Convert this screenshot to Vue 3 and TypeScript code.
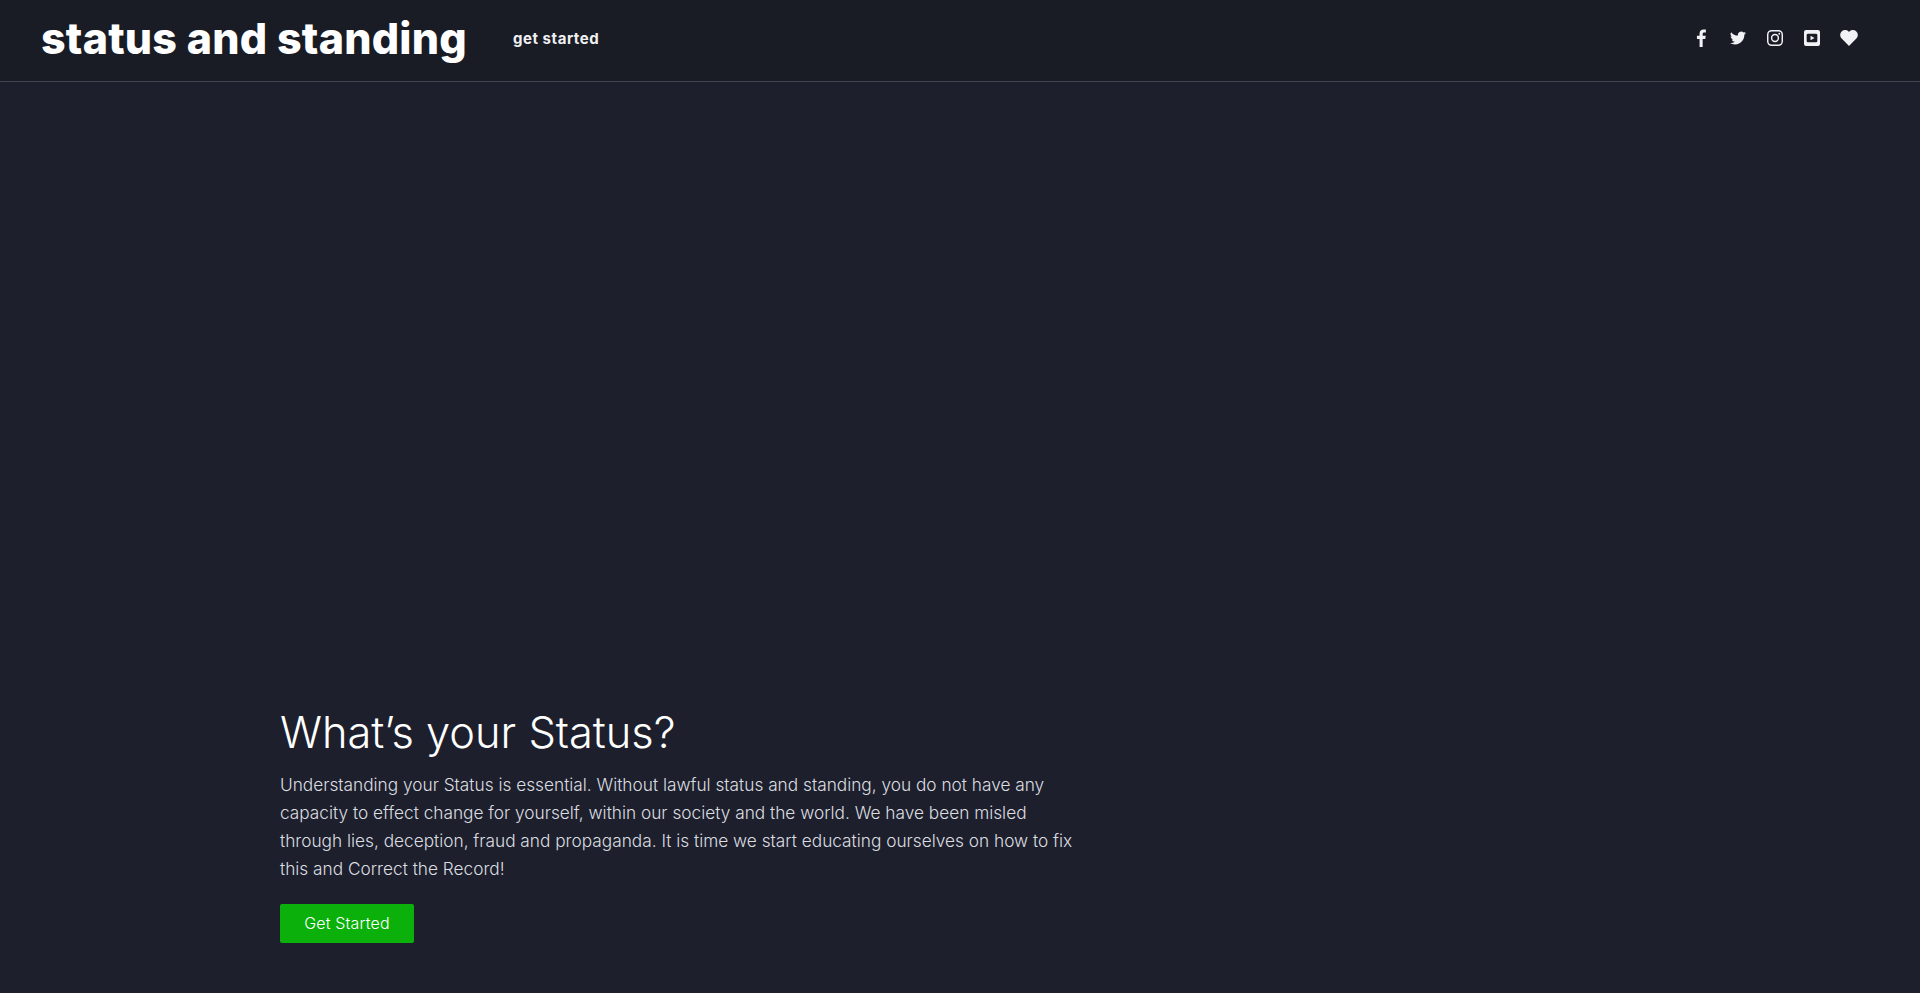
<template>
  <div class="page">
    <header class="topbar">
      <a class="brand">status and standing</a>
      <a class="nav-link">get started</a>
      <div class="socials">
        <svg v-for="icon in icons" :key="icon.name" class="social" :viewBox="icon.box" fill="currentColor">
          <path :d="icon.d" :fill-rule="icon.rule" />
        </svg>
      </div>
    </header>
    <main class="hero">
      <div class="hero-copy">
        <h1>What’s your Status?</h1>
        <p>Understanding your Status is essential. Without lawful status and standing, you do not have any capacity to effect change for yourself, within our society and the world. We have been misled through lies, deception, fraud and propaganda. It is time we start educating ourselves on how to fix this and Correct the Record!</p>
        <button class="cta">Get Started</button>
      </div>
    </main>
  </div>
</template>

<script setup lang="ts">
interface SocialIcon {
  name: string
  box: string
  d: string
  rule?: 'evenodd' | 'nonzero'
}

const icons: SocialIcon[] = [
  {
    name: 'facebook',
    box: '0 0 24 24',
    d: 'M14.2 24V13.3h3.500l.6-4.200h-4.100V6.500c0-1.200.4-2 2.100-2h2.200V.8C18.100.7 16.800.6 15.400.6c-3.100 0-5.300 1.900-5.300 5.400v3.100H6.600v4.200h3.500V24z'
  },
  {
    name: 'twitter',
    box: '-1.5 -1.5 27 27',
    d: 'M24 4.600c-.9.400-1.800.7-2.800.8 1-.6 1.800-1.600 2.200-2.700-1 .6-2 1-3.100 1.200A4.900 4.900 0 0 0 11.900 8.400 14 14 0 0 1 1.700 3.200a4.900 4.900 0 0 0 1.500 6.600c-.8 0-1.600-.2-2.200-.6v.1c0 2.400 1.700 4.400 3.900 4.800-.7.200-1.500.2-2.200.1.600 2 2.400 3.400 4.600 3.400A9.900 9.900 0 0 1 0 19.600a14 14 0 0 0 7.500 2.200c9.100 0 14.300-7.700 14-14.600 1-.7 1.800-1.600 2.500-2.600z'
  },
  {
    name: 'instagram',
    box: '-1.5 -1.5 27 27',
    rule: 'evenodd',
    d: 'M7 0h10a7 7 0 0 1 7 7v10a7 7 0 0 1-7 7H7a7 7 0 0 1-7-7V7a7 7 0 0 1 7-7zm0 2.200A4.800 4.800 0 0 0 2.200 7v10A4.800 4.800 0 0 0 7 21.800h10a4.800 4.800 0 0 0 4.800-4.800V7A4.800 4.800 0 0 0 17 2.200zM12 5.800a6.200 6.200 0 1 1 0 12.400 6.200 6.200 0 0 1 0-12.400zM12 8a4 4 0 1 0 0 8 4 4 0 0 0 0-8zm6.400-3.800a1.400 1.400 0 1 1 0 2.800 1.400 1.400 0 0 1 0-2.800z'
  },
  {
    name: 'youtube',
    box: '-1.5 -1.500 27 27',
    rule: 'evenodd',
    d: 'M3 0h18a3 3 0 0 1 3 3v18a3 3 0 0 1-3 3H3a3 3 0 0 1-3-3V3a3 3 0 0 1 3-3zm3 5.500a2 2 0 0 0-2 2v9a2 2 0 0 0 2 2h12a2 2 0 0 0 2-2v-9a2 2 0 0 0-2-2zM9.800 8.800l6 3.200-6 3.200z'
  },
  {
    name: 'heart',
    box: '0 0 24 24',
    d: 'M12 22.500 2.200 12.700a6.500 6.500 0 0 1 0-9.300 6.600 6.600 0 0 1 9.300 0l.5.500.5-.5a6.600 6.600 0 0 1 9.300 0 6.500 6.500 0 0 1 0 9.300z'
  }
]
</script>

<style>
body {
  background: #1d202c;
}
</style>

<style scoped>
.page {
  display: flex;
  flex-direction: column;
  min-height: 993px;
  background: #1d202c;
  font-family: Inter, "Liberation Sans", sans-serif;
  color: #fff;
}

.topbar {
  display: flex;
  align-items: center;
  height: 76px;
  padding: 0 62px 5px 41px;
  background: #191c25;
  border-bottom: 1px solid #42444f;
}

.brand {
  font-size: 43px;
  font-weight: 800;
  letter-spacing: 0.2px;
  line-height: 1;
}

.nav-link {
  margin-left: 46px;
  font-size: 15px;
  font-weight: 700;
  letter-spacing: 0.55px;
  color: #f0f0f2;
}

.socials {
  display: flex;
  align-items: center;
  gap: 19px;
  margin-left: auto;
  color: #f1f2f5;
}

.social {
  width: 18px;
  height: 18px;
}

.hero {
  flex: 1;
  display: flex;
  align-items: flex-end;
  padding: 0 0 50px 280px;
}

.hero-copy {
  width: 800px;
}

h1 {
  margin: 0 0 14px;
  font-size: 43.4px;
  font-weight: 300;
  line-height: 50px;
}

p {
  margin: 0 0 21px;
  font-size: 17.25px;
  font-weight: 300;
  line-height: 28px;
  color: #dcdde0;
}

.cta {
  width: 134px;
  height: 39px;
  border: none;
  border-radius: 2px;
  padding: 0 0 2px;
  background: #0bb00b;
  color: #fff;
  font-family: inherit;
  font-size: 16px;
  font-weight: 300;
  letter-spacing: 0.15px;
}
</style>
